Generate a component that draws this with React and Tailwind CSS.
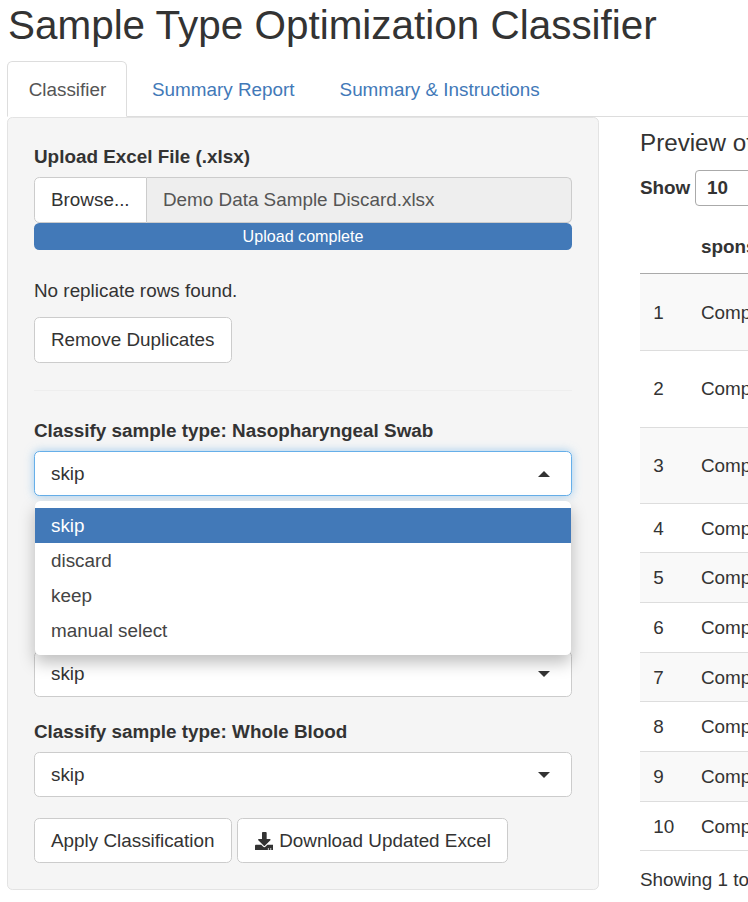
import React from "react";
import { FaDownload } from "react-icons/fa";

const Caret = ({ up }) =>
  up ? (
    <span className="w-0 h-0 border-x-[6.67px] border-x-transparent border-b-[6.67px] border-b-[#333]" />
  ) : (
    <span className="w-0 h-0 border-x-[6.67px] border-x-transparent border-t-[6.67px] border-t-[#333]" />
  );

const Select = ({ open }) => (
  <div
    className={
      "h-[45.6px] flex items-center justify-between pl-[16px] pr-[21.5px] bg-white rounded-[5.33px] border " +
      (open
        ? "border-[#66afe9] shadow-[0_0_10px_rgba(102,175,233,0.6)]"
        : "border-[#cccccc]")
    }
  >
    <span className="pt-[1px]">skip</span>
    <Caret up={open} />
  </div>
);

const Group = ({ label, open, hideLabel, hideSelect, children }) => (
  <div className="relative mb-[21.96px]">
    <div className={"font-bold h-[26.67px] leading-[26.67px] mb-[6.1px] " + (hideLabel ? "invisible" : "")}>{label}</div>
    <div className={hideSelect ? "invisible" : ""}>
      <Select open={open} />
    </div>
    {children}
  </div>
);

const Btn = ({ children }) => (
  <button className="h-[45.5px] px-[16px] pt-[1px] flex items-center bg-white border border-[#cccccc] rounded-[5.33px] text-[#333]">
    {children}
  </button>
);

const rows = [1, 2, 3, 4, 5, 6, 7, 8, 9, 10];

const rowHeight = (n) => {
  if (n === 1 || n === 2) return "h-[77px] ";
  if (n === 3) return "h-[76px] ";
  return "h-[49.67px] ";
};

export default function App() {
  return (
    <div className="w-[748px] h-[902px] overflow-hidden bg-white text-[#333] text-[18.88px] leading-[26.67px] font-['Liberation_Sans',Arial,sans-serif]">
      <h1 className="text-[40.45px] leading-[44px] pt-[3px] pl-[8px] h-[61px] whitespace-nowrap font-normal">
        Sample Type Optimization Classifier
      </h1>

      <div className="ml-[7px] h-[56px] flex items-stretch border-b border-[#dddddd]">
        <div className="w-[120px] h-[56px] flex items-center pl-[20.7px] pt-[3px] bg-white border border-[#dddddd] border-b-white rounded-t-[5.33px] text-[#555555]">
          Classifier
        </div>
        <div className="pl-[25px] pr-[22.5px] pt-[3px] flex items-center text-[#4279b8]">Summary Report</div>
        <div className="pl-[22.5px] pt-[3px] flex items-center text-[#4279b8]">Summary &amp; Instructions</div>
      </div>

      <div className="flex items-start pl-[7px]">
        <div className="w-[592px] shrink-0 bg-[#f5f5f5] border border-[#e3e3e3] rounded-[5.33px] px-[26px] pt-[25.5px] pb-[26px]">
          <div className="font-bold h-[26.67px] mb-[7.2px]">Upload Excel File (.xlsx)</div>
          <div className="flex h-[45.33px]">
            <div className="w-[113px] flex items-center pl-[16px] bg-white border border-[#cccccc] rounded-l-[5.33px]">
              Browse...
            </div>
            <div className="flex-1 flex items-center pl-[16px] bg-[#eeeeee] border border-l-0 border-[#cccccc] rounded-r-[5.33px] text-[#555555]">
              Demo Data Sample Discard.xlsx
            </div>
          </div>
          <div className="h-[27.3px] pt-[1px] flex items-center justify-center bg-[#4279b8] rounded-[5.33px] text-white text-[16.1px]">
            Upload complete
          </div>

          <p className="mt-[28px] h-[26.67px]">No replicate rows found.</p>
          <div className="mt-[12.4px] flex">
            <Btn>Remove Duplicates</Btn>
          </div>
          <div className="mt-[27px] border-t border-[#eeeeee]" />

          <div className="mt-[27.6px]">
            <Group label="Classify sample type: Nasopharyngeal Swab" open>
              <div className="absolute z-10 left-[1px] right-[1px] top-[82.7px] h-[154px] pt-[7px] bg-white rounded-[5.33px] shadow-[0_8px_16px_rgba(0,0,0,0.25)]">
                <div className="h-[35px] pt-[2px] flex items-center pl-[16px] bg-[#4279b8] text-white">skip</div>
                <div className="h-[35px] pt-[2px] flex items-center pl-[16px] text-[#444]">discard</div>
                <div className="h-[35px] pt-[2px] flex items-center pl-[16px] text-[#444]">keep</div>
                <div className="h-[35px] pt-[2px] flex items-center pl-[16px] text-[#444]">manual select</div>
              </div>
            </Group>
            <Group hideLabel hideSelect label="Classify sample type: Plasma" />
            <Group hideLabel label="Classify sample type: Serum" />
            <Group label="Classify sample type: Whole Blood" />
          </div>

          <div className="-mt-[1.5px] flex gap-[5px]">
            <Btn>Apply Classification</Btn>
            <Btn>
              <FaDownload className="w-[18.67px] h-[18.67px] ml-[1px] mr-[6px] text-[#333]" />
              Download Updated Excel
            </Btn>
          </div>
        </div>

        <div className="ml-[41px] w-[700px] shrink-0">
          <div className="text-[24.2px] leading-[26.4px] mt-[13px] whitespace-nowrap">Preview of uploaded data</div>
          <div className="mt-[13.6px] flex items-center h-[35.7px]">
            <span className="font-bold w-[50px]">Show</span>
            <div className="ml-[5px] w-[90px] h-[35.7px] flex items-center pl-[11px] bg-white border border-[#aaaaaa] rounded-[4px] font-bold">
              10
            </div>
          </div>
          <table className="mt-[12px] w-[700px] table-fixed border-collapse whitespace-nowrap">
            <thead>
              <tr className="h-[55.5px] border-b border-[#aaaaaa]">
                <th className="w-[61px]" />
                <th className="text-left font-bold pt-[5px]">sponsor</th>
              </tr>
            </thead>
            <tbody>
              {rows.map((n, i) => (
                <tr
                  key={n}
                  className={
                    rowHeight(n) +
                    "border-b border-[#dddddd] " +
                    (i % 2 === 0 ? "bg-[#f9f9f9]" : "bg-white")
                  }
                >
                  <td className={"pl-[13.33px] " + (n === 1 ? "pt-[3px]" : "pt-[2px]")}>{n}</td>
                  <td className={n === 1 ? "pt-[3px]" : "pt-[2px]"}>Company Sponsor</td>
                </tr>
              ))}
            </tbody>
          </table>
          <div className="mt-[15.5px] whitespace-nowrap">Showing 1 to 10 of 10 entries</div>
        </div>
      </div>
    </div>
  );
}
